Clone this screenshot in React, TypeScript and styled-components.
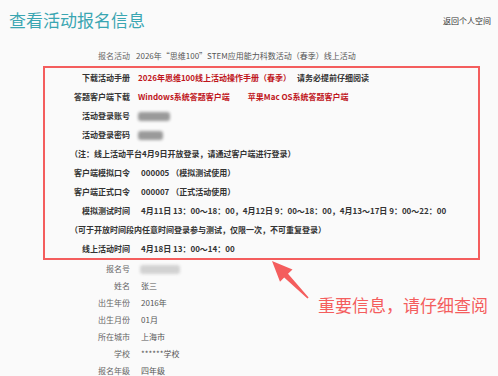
import React from 'react';
import styled, { createGlobalStyle } from 'styled-components';

const GlobalStyle = createGlobalStyle`
    html, body {
        margin: 0;
        padding: 0;
        background: #fafafa;
    }
    body {
        font-family: "Noto Sans CJK SC", "Noto Sans", sans-serif;
        color: #333;
    }
`;

const Page = styled.div`
    position: relative;
    width: 498px;
    height: 376px;
    overflow: hidden;
    background: #fafafa;
`;

const Header = styled.header`
    display: flex;
    justify-content: space-between;
    align-items: center;
    height: 24px;
    padding: 8px 7px 0 9px;
`;

const Title = styled.h1`
    margin: 0;
    font-size: 17px;
    font-weight: 400;
    color: #3aa6b2;
    line-height: 24px;
`;

const BackLink = styled.a`
    font-size: 8px;
    color: #333;
    text-decoration: none;
    cursor: pointer;
`;

const Form = styled.div`
    margin-top: 15px;
    padding-left: 8px;
`;

const Row = styled.div<{ $label: number; $gap: number; $height: number }>`
    display: grid;
    grid-template-columns: ${p => p.$label}px 1fr;
    column-gap: ${p => p.$gap}px;
    align-items: center;
    height: ${p => p.$height}px;
    font-size: 8px;
    white-space: nowrap;
`;

const Label = styled.span`
    text-align: right;
    color: #666;
`;

const Value = styled.span`
    color: #555;
`;

const ImportantBox = styled.div`
    margin: 2px 10px 0 35px;
    border: 2px solid #f45d5d;
    width: 433px;
`;

const StrongLabel = styled.span`
    text-align: right;
    color: #333;
    font-weight: 700;
`;

const StrongValue = styled.span`
    color: #333;
    font-weight: 700;
`;

const RedLink = styled.a<{ $gapAfter?: number }>`
    color: #c0161c;
    font-weight: 700;
    text-decoration: none;
    margin-right: ${p => p.$gapAfter ?? 0}px;
`;

const Note = styled.div`
    height: 19px;
    line-height: 19px;
    padding-left: 25px;
    font-size: 8px;
    font-weight: 700;
    color: #333;
    white-space: nowrap;
`;

const Masked = styled.span<{ $w: number; $tone: string }>`
    display: inline-block;
    vertical-align: middle;
    width: ${p => p.$w}px;
    height: 9px;
    border-radius: 3px;
    background: ${p => p.$tone};
    filter: blur(1.6px);
`;

const Callout = styled.div`
    position: absolute;
    left: 318px;
    top: 293px;
    font-size: 17px;
    line-height: 24px;
    color: #f45d5d;
    white-space: nowrap;
`;

const ArrowSvg = styled.svg`
    position: absolute;
    left: 265px;
    top: 255px;
`;

const boxRows: { label: string; value: React.ReactNode }[] = [
    {
        label: '下载活动手册',
        value: (
            <>
                <RedLink $gapAfter={6}>2026年思维100线上活动操作手册（春季）</RedLink>
                请务必提前仔细阅读
            </>
        ),
    },
    {
        label: '答题客户端下载',
        value: (
            <>
                <RedLink $gapAfter={18}>Windows系统答题客户端</RedLink>
                <RedLink>苹果Mac OS系统答题客户端</RedLink>
            </>
        ),
    },
    { label: '活动登录账号', value: <Masked $w={32} $tone="#9a9a9a" /> },
    { label: '活动登录密码', value: <Masked $w={25} $tone="#9a9a9a" /> },
];

const codeRows = [
    { label: '客户端模拟口令', value: '000005 （模拟测试使用）' },
    { label: '客户端正式口令', value: '000007 （正式活动使用）' },
    { label: '模拟测试时间', value: '4月11日 13：00～18：00，4月12日 9：00～18：00，4月13～17日 9：00～22：00' },
];

const profile = [
    { label: '姓名', value: '张三' },
    { label: '出生年份', value: '2016年' },
    { label: '出生月份', value: '01月' },
    { label: '所在城市', value: '上海市' },
    { label: '学校', value: '******学校' },
    { label: '报名年级', value: '四年级' },
];

const App: React.FC = () => {
    return (
        <Page>
            <GlobalStyle />
            <Header>
                <Title>查看活动报名信息</Title>
                <BackLink>返回个人空间</BackLink>
            </Header>
            <Form>
                <Row $label={122} $gap={6} $height={17}>
                    <Label>报名活动</Label>
                    <Value>2026年“思维100”STEM应用能力科数活动（春季）线上活动</Value>
                </Row>

                <ImportantBox>
                    {boxRows.map(r => (
                        <Row key={r.label} $label={85} $gap={8} $height={19}>
                            <StrongLabel>{r.label}</StrongLabel>
                            <StrongValue>{r.value}</StrongValue>
                        </Row>
                    ))}
                    <Note>（注：线上活动平台4月9日开放登录，请通过客户端进行登录）</Note>
                    {codeRows.map(r => (
                        <Row key={r.label} $label={85} $gap={11} $height={19}>
                            <StrongLabel>{r.label}</StrongLabel>
                            <StrongValue>{r.value}</StrongValue>
                        </Row>
                    ))}
                    <Note>（可于开放时间段内任意时间登录参与测试，仅限一次，不可重复登录）</Note>
                    <Row $label={85} $gap={11} $height={19}>
                        <StrongLabel>线上活动时间</StrongLabel>
                        <StrongValue>4月18日 13：00～14：00</StrongValue>
                    </Row>
                </ImportantBox>

                <Row $label={122} $gap={10} $height={17}>
                    <Label>报名号</Label>
                    <Value><Masked $w={40} $tone="#d2d2d2" /></Value>
                </Row>
                {profile.map(p => (
                    <Row key={p.label} $label={122} $gap={11} $height={17}>
                        <Label>{p.label}</Label>
                        <Value>{p.value}</Value>
                    </Row>
                ))}
            </Form>

            <ArrowSvg width="50" height="50" viewBox="0 0 50 50">
                <polygon
                    points="7,6 27.5,14.5 23,18.8 43.6,42.6 42.4,43.6 19.2,22.4 15,26.8"
                    fill="#f45d5d"
                />
            </ArrowSvg>
            <Callout>重要信息，请仔细查阅</Callout>
        </Page>
    );
};

export default App;
